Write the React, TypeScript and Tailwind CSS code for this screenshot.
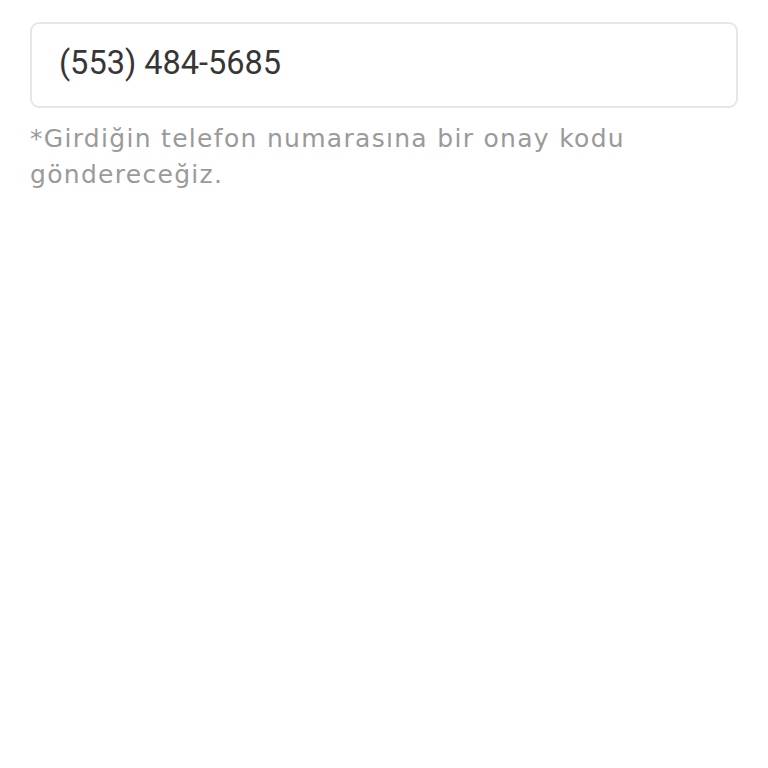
export default function App() {
  return (
    <div className="min-h-[768px] w-full bg-white px-[30px] pt-[22px]">
      <div className="flex h-[86px] items-center rounded-[9px] border-2 border-[#e6e6e6] bg-white px-[27px] pb-[4px]">
        <span
          className="text-[32.5px] leading-none text-[#363636]"
          style={{ fontFamily: "Roboto, sans-serif" }}
        >
          (553) 484-5685
        </span>
      </div>
      <p
        className="mt-[13px] text-[25px] leading-[36px] tracking-[1.3px] text-[#9a9a9a]"
        style={{ fontFamily: '"DejaVu Sans", sans-serif' }}
      >
        *Girdiğin telefon numarasına bir onay kodu göndereceğiz.
      </p>
    </div>
  );
}
